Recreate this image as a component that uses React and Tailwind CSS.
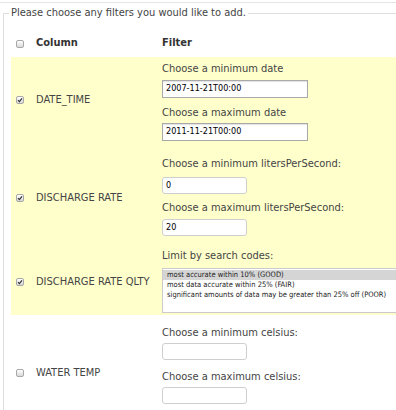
import React from "react";

const Check = ({ checked }) => (
  <span className="flex h-[8px] w-[8px] shrink-0 items-center justify-center rounded-[2px] border border-[#a8a8a8] bg-gradient-to-b from-[#ffffff] to-[#d9d9d9]">
    {checked && (
      <svg width="6" height="6" viewBox="0 0 6 6">
        <path d="M1 3.2 L2.4 4.6 L5 1.4" fill="none" stroke="#333" strokeWidth="1.2" />
      </svg>
    )}
  </span>
);

const Label = ({ children, className = "" }) => (
  <div className={"h-[14px] leading-[16px] whitespace-nowrap " + className}>{children}</div>
);

const DateInput = ({ value, className = "" }) => (
  <div
    className={
      "flex h-[18px] w-[146px] items-center border border-[#a9a9a9] bg-white pl-[3px] font-['DejaVu_Sans',sans-serif] text-[9px] text-black shadow-[inset_0_1px_1px_rgba(0,0,0,0.12)] " +
      className
    }
  >
    {value}
  </div>
);

const NumInput = ({ value, className = "" }) => (
  <div
    className={
      "flex h-[17px] w-[85px] items-center rounded-[3px] border border-[#cfcfcf] bg-white pl-[3px] font-['DejaVu_Sans',sans-serif] text-[9px] text-black " +
      className
    }
  >
    {value}
  </div>
);

const LeftCell = ({ checked, name, top }) => (
  <div className="flex w-[151px] shrink-0 items-start" style={{ paddingTop: top }}>
    <div className="flex h-[14px] items-center pl-[5px]">
      <Check checked={checked} />
    </div>
    <span className="ml-[12px] h-[14px] leading-[14px] whitespace-nowrap">{name}</span>
  </div>
);

export default function App() {
  return (
    <div className="h-[410px] w-[396px] overflow-hidden bg-white font-['DejaVu_Sans_Condensed','DejaVu_Sans',sans-serif] text-[11px] text-[#444] [font-stretch:condensed]">
      <div className="h-[3px] border-b border-[#e4e4e4]" />
      <fieldset className="ml-[3px] mt-[3px] w-[480px] border border-[#dedede]">
        <legend className="ml-[5px] px-[2px] leading-[14px]">
          Please choose any filters you would like to add.
        </legend>
        <div className="ml-[7px] mt-[10px]">
          {/* header */}
          <div className="flex h-[27px] items-center font-bold text-[#333]">
            <div className="flex w-[151px] items-center">
              <div className="pl-[5px]">
                <Check />
              </div>
              <span className="ml-[12px]">Column</span>
            </div>
            <span>Filter</span>
          </div>

          {/* DATE_TIME */}
          <div className="flex h-[88px] bg-[#ffffcc]">
            <LeftCell checked name="DATE_TIME" top={36} />
            <div className="flex flex-col pt-[4px]">
              <Label>Choose a minimum date</Label>
              <DateInput value="2007-11-21T00:00" className="mt-[5px]" />
              <Label className="mt-[7px]">Choose a maximum date</Label>
              <DateInput value="2011-11-21T00:00" className="mt-[4px]" />
            </div>
          </div>

          {/* DISCHARGE RATE */}
          <div className="flex h-[97px] bg-[#ffffcc]">
            <LeftCell checked name="DISCHARGE RATE" top={46} />
            <div className="flex flex-col pt-[11px]">
              <Label>Choose a minimum litersPerSecond:</Label>
              <NumInput value="0" className="mt-[7px]" />
              <Label className="mt-[6px]">Choose a maximum litersPerSecond:</Label>
              <NumInput value="20" className="mt-[5px]" />
            </div>
          </div>

          {/* DISCHARGE RATE QLTY */}
          <div className="flex h-[73px] bg-[#ffffcc]">
            <LeftCell checked name="DISCHARGE RATE QLTY" top={33} />
            <div className="flex flex-1 flex-col pt-[6px]">
              <Label>Limit by search codes:</Label>
              <div className="mt-[6px] h-[45px] border border-[#cbcbcb] bg-white pt-[1px] font-['DejaVu_Sans',sans-serif] text-[7.5px] leading-[10px] text-[#222]">
                <div className="bg-[#d5d5d5] pl-[4px]">most accurate within 10% (GOOD)</div>
                <div className="pl-[4px]">most data accurate within 25% (FAIR)</div>
                <div className="pl-[4px] whitespace-nowrap">
                  significant amounts of data may be greater than 25% off (POOR)
                </div>
              </div>
            </div>
          </div>

          {/* WATER TEMP */}
          <div className="flex h-[116px]">
            <LeftCell name="WATER TEMP" top={51} />
            <div className="flex flex-col pt-[10px]">
              <Label>Choose a minimum celsius:</Label>
              <NumInput value="" className="mt-[4px]" />
              <Label className="mt-[9px]">Choose a maximum celsius:</Label>
              <NumInput value="" className="mt-[4px]" />
            </div>
          </div>
        </div>
      </fieldset>
    </div>
  );
}
